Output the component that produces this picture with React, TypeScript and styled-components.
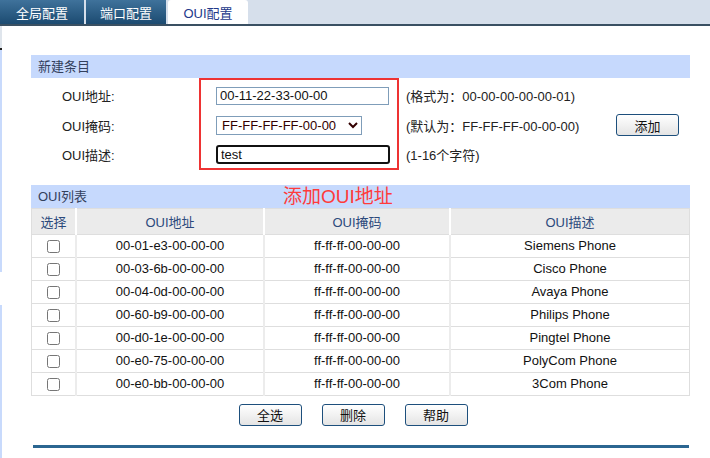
import React from 'react'
import styled, { createGlobalStyle } from 'styled-components'

const GlobalStyle = createGlobalStyle`
  html, body {
    margin: 0;
    padding: 0;
    background: #fff;
  }
  body {
    font-family: "Liberation Sans", Arial, "Noto Sans CJK SC", sans-serif;
    font-size: 13px;
    color: #222;
  }
`

const Page = styled.div`
  display: flex;
  flex-direction: column;
  width: 710px;
  height: 458px;
  overflow: hidden;
`

const TabBar = styled.div`
  display: flex;
  gap: 2px;
  height: 24px;
  background: #d6dfeb;
  border-bottom: 2px solid #3a5062;
`

const Tab = styled.div<{ $active?: boolean }>`
  width: 80px;
  display: flex;
  align-items: center;
  justify-content: center;
  font-size: 13px;
  color: ${p => (p.$active ? '#22388a' : '#fff')};
  background: ${p => (p.$active ? '#fff' : 'linear-gradient(#3f729b, #1c4b71)')};
  border-radius: ${p => (p.$active ? '3px 3px 0 0' : '0')};
  &:first-child {
    width: 84px;
  }
`

const Body = styled.div`
  flex: 1;
  display: flex;
`

const LeftStrip = styled.div`
  flex: 0 0 2px;
  background: linear-gradient(
    #dfe5ec 0px, #dfe5ec 22px, #222 22px, #222 24px,
    #c8dafc 24px, #c8dafc 246px, #fff 246px, #fff 279px, #c8dafc 279px
  );
`

const Content = styled.div`
  flex: 1;
  min-width: 0;
  padding: 29px 20px 0 29px;
`

const Section = styled.div`
  position: relative;
`

const SectionHeader = styled.div`
  height: 23px;
  line-height: 23px;
  padding-left: 7px;
  background: #c6d9fd;
  color: #33405c;
  font-size: 13px;
`

const Form = styled.div`
  position: relative;
  display: grid;
  grid-template-columns: 154px 190px 210px 1fr;
  grid-auto-rows: 29.5px;
  align-items: center;
  padding: 3px 0 0 31px;
  margin-bottom: 15px;
`

const Label = styled.div`
  color: #222;
`

const Hint = styled.div`
  color: #222;
`

const TextInput = styled.input<{ $focused?: boolean }>`
  box-sizing: border-box;
  width: ${p => (p.$focused ? 174 : 173)}px;
  height: ${p => (p.$focused ? 19 : 18)}px;
  padding: 0 3px;
  font: 13px "Liberation Sans", Arial, sans-serif;
  color: #111;
  border: ${p => (p.$focused ? '2px solid #111' : '1px solid #7f9db9')};
  border-radius: ${p => (p.$focused ? '3px' : '0')};
  outline: none;
  background: #fff;
`

const Select = styled.select`
  box-sizing: border-box;
  width: 146px;
  height: 19px;
  padding: 0 0 0 1px;
  font: 13px "Liberation Sans", Arial, sans-serif;
  color: #300;
  border: 1px solid #7f9db9;
  border-radius: 0;
  background: #fff;
`

const Button = styled.button`
  width: 63px;
  height: 22px;
  padding: 0;
  font: 13px "Liberation Sans", Arial, "Noto Sans CJK SC", sans-serif;
  color: #111;
  background: linear-gradient(#ffffff, #e4e4e4);
  border: 1px solid #1d4f7c;
  border-radius: 3px;
`

const RedBox = styled.div`
  position: absolute;
  left: 168px;
  top: 0;
  width: 200px;
  height: 92px;
  box-sizing: border-box;
  border: 2px solid #ee3333;
  pointer-events: none;
`

const Annotation = styled.div`
  position: absolute;
  left: 252px;
  top: 1px;
  font-size: 19px;
  line-height: 22px;
  color: #ff3b3b;
`

const Table = styled.table`
  width: 100%;
  border-collapse: collapse;
  table-layout: fixed;
  border: 1px solid #dedede;
`

const Th = styled.th<{ $w?: number }>`
  width: ${p => (p.$w ? `${p.$w}px` : 'auto')};
  height: 25px;
  padding: 0;
  font-weight: normal;
  color: #2c4a7c;
  background: #ebebeb;
  border-left: 2px solid #fff;
  &:first-child {
    border-left: none;
  }
`

const Td = styled.td`
  height: 22px;
  padding: 0;
  text-align: center;
  color: #111;
  border: 1px solid #dedede;
  border-left: 2px solid #ececec;
  &:first-child {
    border-left: none;
  }
`

const Check = styled.input`
  margin: 0;
  width: 13px;
  height: 13px;
  vertical-align: middle;
`

const ButtonRow = styled.div`
  display: flex;
  justify-content: center;
  gap: 20px;
  margin-top: 8px;
  padding-right: 15px;
`

const Rule = styled.div`
  height: 3px;
  margin: 19px 1px 0 2px;
  background: #2b6691;
`

const rows = [
  ['00-01-e3-00-00-00', 'ff-ff-ff-00-00-00', 'Siemens Phone'],
  ['00-03-6b-00-00-00', 'ff-ff-ff-00-00-00', 'Cisco Phone'],
  ['00-04-0d-00-00-00', 'ff-ff-ff-00-00-00', 'Avaya Phone'],
  ['00-60-b9-00-00-00', 'ff-ff-ff-00-00-00', 'Philips Phone'],
  ['00-d0-1e-00-00-00', 'ff-ff-ff-00-00-00', 'Pingtel Phone'],
  ['00-e0-75-00-00-00', 'ff-ff-ff-00-00-00', 'PolyCom Phone'],
  ['00-e0-bb-00-00-00', 'ff-ff-ff-00-00-00', '3Com Phone'],
]

export default function App() {
  return (
    <>
      <GlobalStyle />
      <Page>
        <TabBar>
          <Tab>全局配置</Tab>
          <Tab>端口配置</Tab>
          <Tab $active>OUI配置</Tab>
        </TabBar>
        <Body>
          <LeftStrip />
          <Content>
            <Section>
              <SectionHeader>新建条目</SectionHeader>
              <Form>
                <Label>OUI地址:</Label>
                <div><TextInput defaultValue="00-11-22-33-00-00" /></div>
                <Hint>(格式为：00-00-00-00-00-01)</Hint>
                <div />
                <Label>OUI掩码:</Label>
                <div>
                  <Select defaultValue="FF-FF-FF-FF-00-00">
                    <option>FF-FF-FF-00-00-00</option>
                    <option>FF-FF-FF-FF-00-00</option>
                  </Select>
                </div>
                <Hint>(默认为：FF-FF-FF-00-00-00)</Hint>
                <div><Button>添加</Button></div>
                <Label>OUI描述:</Label>
                <div><TextInput $focused defaultValue="test" /></div>
                <Hint>(1-16个字符)</Hint>
                <div />
                <RedBox />
              </Form>
            </Section>
            <Section>
              <SectionHeader>OUI列表</SectionHeader>
              <Annotation>添加OUI地址</Annotation>
              <Table>
                <thead>
                  <tr>
                    <Th $w={43}>选择</Th>
                    <Th $w={186}>OUI地址</Th>
                    <Th $w={184}>OUI掩码</Th>
                    <Th>OUI描述</Th>
                  </tr>
                </thead>
                <tbody>
                  {rows.map(r => (
                    <tr key={r[0]}>
                      <Td><Check type="checkbox" /></Td>
                      <Td>{r[0]}</Td>
                      <Td>{r[1]}</Td>
                      <Td>{r[2]}</Td>
                    </tr>
                  ))}
                </tbody>
              </Table>
              <ButtonRow>
                <Button>全选</Button>
                <Button>删除</Button>
                <Button>帮助</Button>
              </ButtonRow>
              <Rule />
            </Section>
          </Content>
        </Body>
      </Page>
    </>
  )
}
